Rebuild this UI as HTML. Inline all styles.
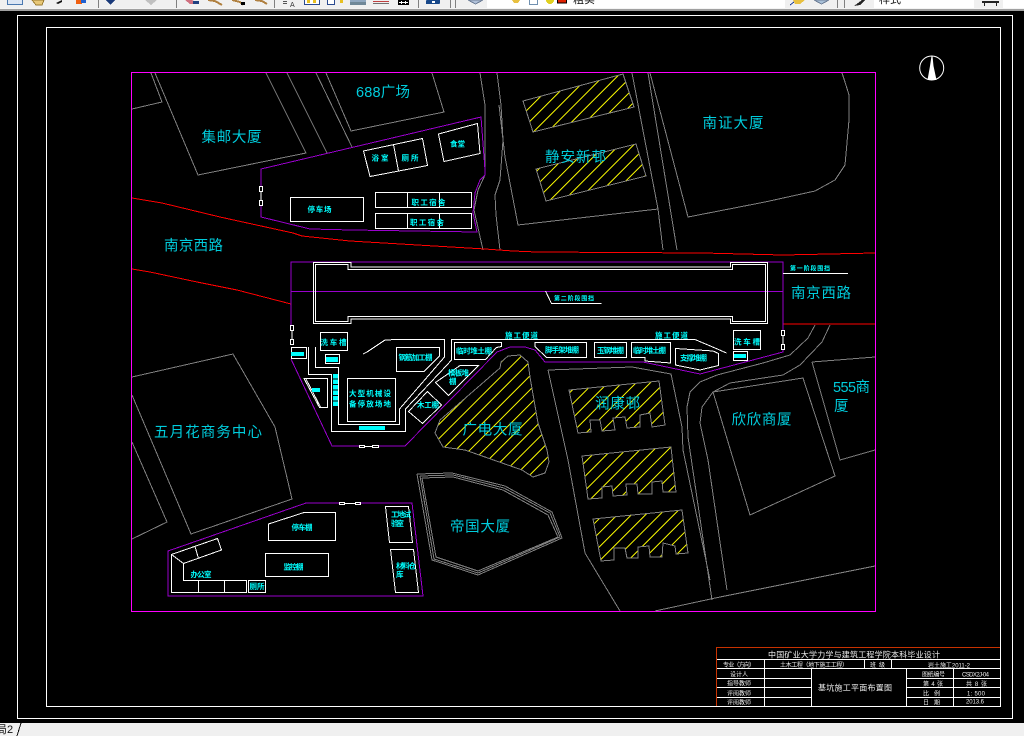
<!DOCTYPE html>
<html lang="zh"><head><meta charset="utf-8"><title>CAD</title>
<style>
html,body{margin:0;padding:0;background:#000;width:1024px;height:736px;overflow:hidden}
svg{display:block;position:absolute;left:0;top:0}
text{font-family:"Liberation Sans","Noto Sans CJK SC",sans-serif}
.g{fill:none;stroke:#808080}
.w{fill:none;stroke:#fff}
.p{fill:none;stroke:#9900cc}
.r{fill:none;stroke:#f00}
.h{fill:url(#h);stroke:#808080}
.b{fill:#00ccdc;font-size:14.5px}
.s{fill:#0ff;font-size:7.5px;font-weight:bold}
.t{fill:#eee;font-size:6px}
</style></head><body>
<svg width="1024" height="736" viewBox="0 0 1024 736" xmlns="http://www.w3.org/2000/svg" shape-rendering="crispEdges">
<defs>
<pattern id="h" patternUnits="userSpaceOnUse" width="10" height="10" patternTransform="rotate(45)"><line x1="0.5" y1="0" x2="0.5" y2="10" stroke="#ff0" stroke-width="1"/></pattern>
</defs>
<rect width="1024" height="736" fill="#000"/>

<!-- sheet frames -->
<rect x="17.5" y="15.5" width="995" height="703" class="w"/>
<rect x="46.5" y="27.5" width="954" height="679" class="w"/>
<rect x="131.5" y="72.5" width="744" height="539" fill="none" stroke="#f0f"/>

<!-- grey context lines -->
<g class="g">
<polyline points="132,109 162,102 151,73"/>
<polyline points="155,73 198,175 306,153 266,73"/>
<polyline points="287,73 327,153"/>
<polyline points="316,73 352,147"/>
<polyline points="326,73 351,131 444,112 432,73"/>
<polyline points="480,73 485,105 485,175 478,190 474,210 483,250"/>
<polyline points="497,73 501,105 503,140 500,180 495,195 496,215 500,250"/>
<polyline points="499,105 505,157 518,225 658,209"/>
<polyline points="632,73 658,209 663,250"/>
<polyline points="648,73 677,250"/>
<polyline points="650,73 688,217 765,202 815,191 835,180 845,165 849,120 849,95 845,82 842,73"/>
<polyline points="815,325 808,338 790,355 763,363 717,375 700,382 690,392 687,407 688,437 712,600"/>
<polyline points="830,325 822,342 800,365 783,375 730,383 713,392 702,407 700,423 708,460 727,590"/>
<polyline points="713,392 803,378 835,476 750,515 713,392"/>
<polyline points="812,362 875,357"/>
<polyline points="812,362 840,460 875,450"/>
<polyline points="655,611 720,597 875,566"/>
<polyline points="548,370 632,367 671,374 682,427 683,450 710,580"/>
<polyline points="548,370 568,460 585,553 620,611"/>
<polyline points="132,377 233,354 275,427 292,499 191,534 132,395"/>
<polyline points="132,442 167,522 132,539"/>
<polyline points="417,474 452,473 505,486 552,512 562,538 478,575 432,560 417,474"/>
<polyline points="420,476 453,475 504,488 550,513 560,537 478,573 434,559 420,476"/>
<polyline points="422,478 453,477 503,490 548,515 558,537 478,571 436,557 422,478"/>
</g>

<!-- hatched buildings -->
<polygon class="h" points="523,101 623,74 634,107 533,132"/>
<polygon class="h" points="536,169 636,144 646,176 546,201"/>
<polygon class="h" points="435,433 440,420 500,368 501,362 508,356 520,355 528,362 530,377 538,423 547,450 549,462 545,473 533,477 522,470 465,450 443,447"/>
<polygon class="h" points="569,390 659,381 665,425 652,427 650,413 640,415 640,427 627,428 625,417 613,418 615,430 602,431 600,420 590,420 591,432 578,433"/>
<polygon class="h" points="582,456 671,447 676,492 663,492 662,481 652,482 652,494 638,494 637,484 626,484 627,495 613,496 612,486 602,487 602,498 588,499"/>
<polygon class="h" points="593,519 682,510 688,553 676,554 675,546 663,543 662,557 650,557 649,546 638,547 638,558 627,558 625,548 614,548 614,560 601,561"/>

<!-- red roads -->
<polyline class="r" points="132,198 162,203 220,217 293,233 302,236 350,241 485,249 513,251 537,252 703,253 783,255 875,253"/>
<polyline class="r" points="132,269 150,272 197,282 237,290 291,304"/>
<line class="r" x1="783" y1="324" x2="875" y2="324"/>

<!-- purple site boundaries -->
<g class="p">
<polyline points="261,186 261,169 481,117 485,170 485,175 480,180 475,193 473,213 477,232 352,230 310,229 261,217 261,205"/>
<polyline points="291,325 291,262 783,262 783,330"/>
<line x1="291" y1="291.5" x2="783" y2="291.5"/>
<polyline points="291,359 332,446 359,446"/>
<polyline points="378,446 405,446 497,352 510,347 525,347 535,350 545,362 643,362 700,374 783,352 783,350"/>
<polyline points="339,503 306,503 168,551 168,596 423,596 412,503 359,503"/>
</g>

<!-- white site layout -->
<g class="w">
<polygon points="313.5,262.5 351,262.5 351,267 730.5,267 730.5,262.5 767.5,262.5 767.5,323.5 730.5,323.5 730.5,319 351,319 351,323.5 313.5,323.5"/>
<polygon points="315.5,264.5 348,264.5 348,269.5 732.5,269.5 732.5,264.5 765.5,264.5 765.5,321.5 732.5,321.5 732.5,316.5 348,316.5 348,321.5 315.5,321.5"/>
<polyline points="545.5,291 551.5,303.5 601.5,303.5"/>
<line x1="783" y1="273.5" x2="848" y2="273.5"/>
<rect x="320.5" y="332.5" width="27" height="18"/>
<rect x="325.5" y="354.5" width="14" height="9"/>
<rect x="291.5" y="347.5" width="15" height="11"/>
<polyline points="308.5,347 308.5,374.5 331.5,374.5 331.5,431.5 405.5,431.5 405.5,409 447,365 451.5,360 451.5,339.5 695,339.5 715,348 726.5,353"/>
<polyline points="315.5,347 315.5,367.5 338.5,367.5 338.5,424.5 399.5,424.5 399.5,409 444.5,357 444.5,339.5 397,339.5 385,340 367,352 363,354"/>
<rect x="347.5" y="378.5" width="48" height="43"/>
<polygon points="304,378.5 327.5,378.5 327.5,407.5 319.5,407.5"/>
<polyline points="306,379 320.5,407"/>
<polygon points="396.5,347.5 439.5,347.5 439.5,356 424,371.5 396.5,371.5"/>
<polygon points="454.5,342.5 501.5,342.5 501.5,346.5 496.5,347.5 485.5,359.5 454.5,359.5"/>
<polygon points="435.5,382.5 460,365.5 478.5,365.5 448.5,395.5"/>
<polygon points="408.5,411.5 427.5,391.5 441.5,405 422.5,423.5"/>
<polygon points="535,342.5 586.5,342.5 586.5,357.5 546.5,357.5 535,346.5"/>
<rect x="594.5" y="342.5" width="32" height="15"/>
<polygon points="631.5,342.5 670.5,342.5 670.5,363 645,361 645,357.5 631.5,357.5"/>
<polygon points="675.5,348.5 713,351 718.5,353.5 718.5,365.5 700,370 675.5,365"/>
<rect x="733.5" y="330.5" width="27" height="19"/>
<rect x="733.5" y="351.5" width="14" height="9"/>
<polygon points="363.5,151 422.5,138.5 427.5,165.5 370,176.5"/>
<line x1="393.5" y1="144.5" x2="398.5" y2="171"/>
<polygon points="438.5,134 477.5,123.5 480,153.5 444,161.5"/>
<rect x="375.5" y="192.5" width="96" height="15"/>
<line x1="407.5" y1="192.5" x2="407.5" y2="207.5"/><line x1="439.5" y1="192.5" x2="439.5" y2="207.5"/>
<rect x="375.5" y="213.5" width="96" height="15"/>
<line x1="407.5" y1="213.5" x2="407.5" y2="228.5"/><line x1="439.5" y1="213.5" x2="439.5" y2="228.5"/>
<rect x="290.5" y="197.5" width="73" height="24"/>
<polygon points="268.5,524 304,512.5 335.5,512.5 335.5,540.5 268.5,540.5"/>
<rect x="265.5" y="553.5" width="63" height="23"/>
<polygon points="171.5,554.5 217.5,538.5 221.5,550 183.5,563.5 183.5,580.5 246.5,580.5 246.5,592.5 171.5,592.5"/>
<line x1="195" y1="546.5" x2="198.5" y2="558.5"/><line x1="171.5" y1="554.5" x2="183.5" y2="563.5"/>
<line x1="198.5" y1="580.5" x2="198.5" y2="592.5"/><line x1="224.5" y1="580.5" x2="224.5" y2="592.5"/>
<rect x="248.5" y="580.5" width="17" height="12"/>
<polygon points="385.5,506.5 408.5,506.5 412.5,542.5 389.5,542.5"/>
<polygon points="390.5,549.5 413.5,549.5 418.5,592.5 395.5,592.5"/>
<!-- gates -->
<rect x="259.5" y="186.5" width="3" height="5"/><rect x="259.5" y="200.5" width="3" height="5"/><line x1="261" y1="191" x2="261" y2="200"/>
<rect x="290.5" y="325.5" width="3" height="5"/><rect x="290.5" y="339.5" width="3" height="5"/><line x1="292" y1="330" x2="292" y2="340"/>
<rect x="781.5" y="330.5" width="3" height="5"/><rect x="781.5" y="344.5" width="3" height="5"/><line x1="783" y1="335" x2="783" y2="345"/>
<rect x="359.5" y="445.5" width="5" height="2"/><rect x="372.5" y="445.5" width="6" height="2"/><line x1="364" y1="446.5" x2="373" y2="446.5"/>
<rect x="339.5" y="502.5" width="5" height="2"/><rect x="355.5" y="502.5" width="5" height="2"/><line x1="344" y1="503.5" x2="356" y2="503.5"/>
</g>

<!-- cyan solid blocks -->
<g fill="#0ff">
<rect x="326" y="357" width="12" height="5"/>
<rect x="291" y="352" width="13" height="4"/>
<rect x="359" y="426" width="26" height="4"/>
<rect x="312" y="388" width="8" height="4"/>
<rect x="734" y="354" width="12" height="4"/>
<rect x="333" y="374" width="5" height="4.5"/><rect x="333" y="379.5" width="5" height="4.5"/><rect x="333" y="385" width="5" height="4.5"/><rect x="333" y="390.5" width="5" height="4.5"/><rect x="333" y="396" width="5" height="4.5"/><rect x="333" y="401.5" width="5" height="4.5"/>
</g>

<!-- compass -->
<g shape-rendering="auto">
<circle cx="931.7" cy="68" r="12" fill="none" stroke="#fff" stroke-width="1"/>
<polygon points="931.5,56 932.5,56 933.5,66 936.5,80 927.5,80 930,66" fill="#fff"/>
</g>

<!-- large labels -->
<g class="b" shape-rendering="auto">
<text x="201.5" y="142" textLength="60">集邮大厦</text>
<text x="356" y="97" textLength="54">688广场</text>
<text x="164" y="250.5" textLength="59">南京西路</text>
<text x="702.5" y="128" textLength="61">南证大厦</text>
<text x="545" y="162" textLength="61">静安新邨</text>
<text x="791" y="298" textLength="60">南京西路</text>
<text x="833" y="392" textLength="37">555商</text>
<text x="834" y="411">厦</text>
<text x="731.5" y="424.5" textLength="60">欣欣商厦</text>
<text x="595" y="408.5" textLength="45">润康邨</text>
<text x="462.5" y="434.5" textLength="60">广电大厦</text>
<text x="450" y="531.5" textLength="60">帝国大厦</text>
<text x="154" y="437" textLength="108">五月花商务中心</text>
</g>

<!-- small labels -->
<g class="s" shape-rendering="auto">
<text x="371.5" y="160.5" textLength="17">浴室</text>
<text x="401.5" y="160.5" textLength="17">厕所</text>
<text x="450" y="146.5" textLength="15">食堂</text>
<text x="411.5" y="205" textLength="34">职工宿舍</text>
<text x="410" y="225" textLength="34">职工宿舍</text>
<text x="307.5" y="212" textLength="24">停车场</text>
<text x="320.5" y="345" textLength="26">洗车槽</text>
<text x="398.5" y="360" textLength="34">钢筋加工棚</text>
<text x="456" y="353.5" textLength="36">临时堆土棚</text>
<text x="448" y="375.5" textLength="21">模板堆</text>
<text x="449" y="384">棚</text>
<text x="417" y="407.5" textLength="22">木工棚</text>
<text x="349" y="396" textLength="42">大型机械设</text>
<text x="349" y="406.5" textLength="42">备停放场地</text>
<text x="505" y="338" textLength="33">施工便道</text>
<text x="655" y="338" textLength="33">施工便道</text>
<text x="545" y="352.5" textLength="34">脚手架堆棚</text>
<text x="597" y="353" textLength="27">玉钢堆棚</text>
<text x="633" y="353" textLength="33">临时堆土棚</text>
<text x="680" y="360.5" textLength="27">支撑堆棚</text>
<text x="734" y="344.5" textLength="26">洗车槽</text>
<text x="291.5" y="530" textLength="21">停车棚</text>
<text x="283.5" y="569.5" textLength="20">监控棚</text>
<text x="190.5" y="577" textLength="21">办公室</text>
<text x="249.5" y="589" textLength="15">厕所</text>
<text x="391" y="517" textLength="20">工地试</text>
<text x="391" y="526" textLength="13">验室</text>
<text x="396" y="568.5" textLength="20">材料仓</text>
<text x="396" y="577">库</text>
</g>
<g fill="#0ff" font-size="6" font-weight="bold" shape-rendering="auto">
<text x="554" y="300.5" textLength="40">第二阶段围挡</text>
<text x="790" y="270.5" textLength="40">第一阶段围挡</text>
</g>

<!-- title block -->
<g class="w">
<line x1="717" y1="659.5" x2="1000" y2="659.5"/>
<line x1="717" y1="668.5" x2="1000" y2="668.5"/>
<line x1="717" y1="678.5" x2="811" y2="678.5"/>
<line x1="717" y1="687.5" x2="811" y2="687.5"/>
<line x1="717" y1="697.5" x2="811" y2="697.5"/>
<line x1="906" y1="678.5" x2="1000" y2="678.5"/>
<line x1="906" y1="687.5" x2="1000" y2="687.5"/>
<line x1="906" y1="697.5" x2="1000" y2="697.5"/>
<line x1="764.5" y1="659" x2="764.5" y2="706"/>
<line x1="864.5" y1="659" x2="864.5" y2="668"/>
<line x1="891.5" y1="659" x2="891.5" y2="668"/>
<line x1="811.5" y1="668" x2="811.5" y2="706"/>
<line x1="906.5" y1="668" x2="906.5" y2="706"/>
<line x1="953.5" y1="668" x2="953.5" y2="706"/>
</g>
<polyline points="716.5,706 716.5,647.5 1000,647.5" fill="none" stroke="#c83200"/>
<g class="t" shape-rendering="auto">
<text x="768" y="657.5" textLength="172" style="font-size:8px">中国矿业大学力学与建筑工程学院本科毕业设计</text>
<text x="723" y="667" textLength="32">专业（方向）</text>
<text x="780" y="667" textLength="68">土木工程（地下施工工程）</text>
<text x="870" y="667" textLength="15">班级</text>
<text x="928" y="667.5" textLength="42">岩土施工2011-2</text>
<text x="730" y="676.5" textLength="18">设计人</text>
<text x="727" y="685.5" textLength="24">指导教师</text>
<text x="727" y="695.5" textLength="24">评阅教师</text>
<text x="727" y="704.5" textLength="24">评阅教师</text>
<text x="818" y="690.5" textLength="74" style="font-size:8px">基坑施工平面布置图</text>
<text x="922" y="676.5" textLength="23">图纸编号</text>
<text x="962" y="676.5" textLength="27">CSDX2J-04</text>
<text x="923" y="686" textLength="20">第 4 张</text>
<text x="966" y="686" textLength="21">共 8 张</text>
<text x="923" y="695.5" textLength="17">比 例</text>
<text x="967" y="695.5" textLength="18">1: 500</text>
<text x="923" y="704.5" textLength="17">日 期</text>
<text x="966" y="703.5" textLength="18">2013.6</text>
</g>

<!-- top toolbar -->
<rect x="0" y="0" width="1024" height="8" fill="#f0f0f0"/>
<rect x="0" y="8" width="1024" height="1" fill="#f4f4f4"/>
<rect x="0" y="9" width="1024" height="2" fill="#a0a0a0"/>
<rect x="487" y="0" width="298" height="8" fill="#fff"/>
<rect x="874" y="0" width="100" height="8" fill="#fff"/>
<rect x="1003" y="0" width="21" height="8" fill="#fff"/>
<g fill="#808080">
<rect x="98" y="0" width="1" height="8"/><rect x="176" y="0" width="1" height="8"/><rect x="274" y="0" width="1" height="8"/><rect x="418" y="0" width="1" height="8"/><rect x="450" y="0" width="1" height="8"/><rect x="455" y="0" width="1" height="8"/><rect x="837" y="0" width="1" height="8"/><rect x="844" y="0" width="1" height="8"/>
</g>
<rect x="7.5" y="-2" width="15" height="6.5" fill="#dce6f4" stroke="#4a78b0"/>
<polygon points="32,0 44,0 42,5 36,5" fill="#e8c878" stroke="#9a7a30"/>
<polygon points="56,3 62,0 62,2 58,4" fill="#111"/>
<rect x="76" y="0" width="6" height="4" fill="#f06010"/><rect x="81" y="0" width="5" height="3" fill="#2060d0"/>
<polygon points="106,0 115,0 110.5,5" fill="#1a3a7a"/>
<polygon points="145,0 157,0 151,5" fill="#c0c0c0"/>
<polygon points="185,0 192,0 199,4 190,4" fill="#d07080"/><rect x="193" y="1" width="6" height="3" fill="#204080"/>
<polyline points="208,0 215,1 222,5" fill="none" stroke="#b08040" stroke-width="2"/>
<polyline points="232,0 240,2 243,5" fill="none" stroke="#b08040" stroke-width="2"/><rect x="241" y="2" width="4" height="3" fill="#000"/>
<polyline points="255,0 262,1 267,4" fill="none" stroke="#b08040" stroke-width="2"/>
<rect x="283" y="1" width="4" height="1" fill="#555"/><rect x="283" y="3" width="4" height="1" fill="#555"/><text x="290" y="7" font-size="7" fill="#333">A</text>
<rect x="304.5" y="-2" width="15" height="6.5" fill="#fff" stroke="#2a4a90"/><rect x="307" y="0" width="3" height="3" fill="#e8c020"/><rect x="313" y="0" width="3" height="3" fill="#e8c020"/>
<rect x="327.5" y="-2" width="7" height="6.5" fill="#fff" stroke="#2a4a90"/><rect x="340" y="0" width="3" height="3" fill="#e8c020"/>
<rect x="350" y="0" width="16" height="2" fill="#90a8c0"/><rect x="350" y="2" width="16" height="3" fill="#708898"/>
<rect x="373" y="1" width="16" height="1" fill="#c04040"/><rect x="373" y="3" width="16" height="1" fill="#707070"/>
<rect x="398" y="0" width="11" height="5" fill="#000"/><rect x="401" y="1" width="1" height="3" fill="#fff"/><rect x="405" y="1" width="1" height="3" fill="#fff"/><rect x="399" y="2" width="9" height="1" fill="#fff"/>
<rect x="426" y="0" width="14" height="4" rx="1" fill="#18488a"/><rect x="432" y="1" width="3" height="2" fill="#fff"/>
<polygon points="468,0 483,0 475.5,4" fill="#b0c0d8" stroke="#708098"/>
<polygon points="512,0 520,0 518,3 514,3" fill="#e8c040"/>
<rect x="529.5" y="-2" width="8" height="6.5" fill="#fff" stroke="#7090b0"/>
<circle cx="550" cy="0" r="4" fill="#e0d020"/><rect x="557.5" y="-2" width="9" height="5" fill="#e02000" stroke="#000"/>
<polygon points="793,0 805,0 800,4 795,4" fill="#e8c040"/><line x1="790" y1="5" x2="794" y2="2" stroke="#2040a0"/>
<polygon points="814,0 829,0 821.5,4" fill="#a8c0d8" stroke="#708098"/>
<polygon points="854,6 862,0 865,0 860,5" fill="#222"/>
<rect x="982" y="1" width="17" height="2" fill="#222"/><rect x="984" y="3" width="1" height="3" fill="#222"/><rect x="996" y="3" width="1" height="3" fill="#222"/>
<svg x="570" y="0" width="30" height="8" overflow="hidden" shape-rendering="auto"><text x="3" y="3" font-size="11" fill="#111">粗实</text></svg>
<svg x="876" y="0" width="30" height="8" overflow="hidden" shape-rendering="auto"><text x="3" y="3" font-size="11" fill="#111">样式</text></svg>

<!-- bottom bar -->
<rect x="0" y="723" width="1024" height="13" fill="#f0f0f0"/>
<text x="-4" y="733" font-size="11" fill="#111" shape-rendering="auto">局2</text>
<line x1="21" y1="723" x2="17" y2="736" stroke="#111"/>
</svg>
</body></html>
